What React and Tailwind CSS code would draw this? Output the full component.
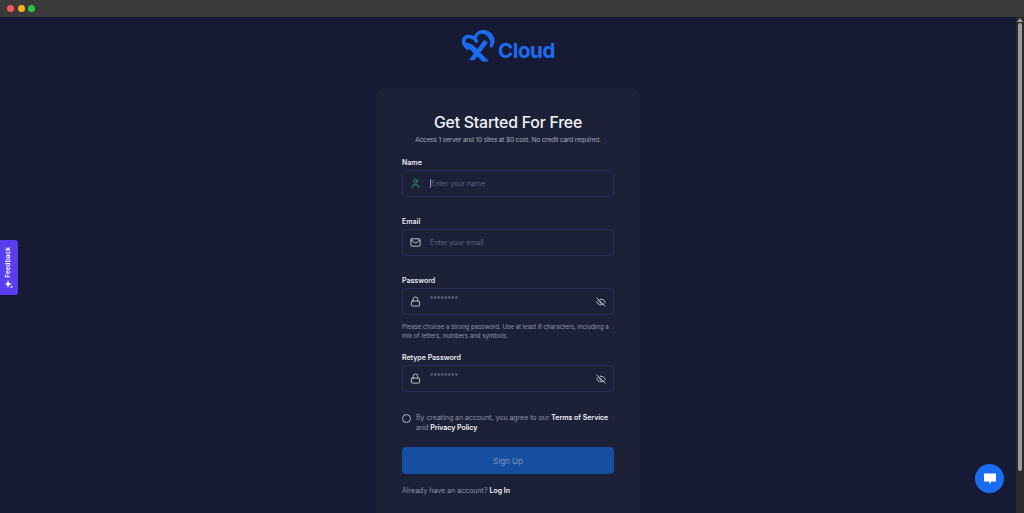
import React from "react";
import { User, Mail, Lock, EyeOff } from "lucide-react";

function Field({ label, placeholder, icon: Icon, iconClass, eye, caret, dots, className = "" }) {
  return (
    <div className={className}>
      <label className="block h-[10px] text-[7px] leading-[10px] font-semibold text-[#e8eaf2]">{label}</label>
      <div className="mt-[2px] flex h-[27px] items-center rounded-[4px] border border-[#262c5c] pl-[7px] pr-[7px]">
        <Icon className={`h-[11px] w-[11px] shrink-0 ${iconClass}`} strokeWidth={2} />
        {caret && <span className="ml-[9px] h-[9px] w-px bg-[#8a90a8]" />}
        <span className={`${caret ? "ml-0" : "ml-[9px]"} flex-1 text-[7px] text-[#5d6380] ${dots ? "-mt-[2px] text-[#747a94]" : "mt-[1px]"}`}>{placeholder}</span>
        {eye && <EyeOff className="h-[10px] w-[10px] text-[#b4b9c9]" strokeWidth={2.4} />}
      </div>
    </div>
  );
}

export default function App() {
  return (
    <div className="flex h-[513px] w-[1024px] flex-col overflow-hidden bg-[#161a35] font-['Inter',sans-serif]">
      <div className="flex h-[17px] shrink-0 items-center gap-[3.5px] bg-[#3a3a3a] pl-[7px]">
        <span className="h-[7px] w-[7px] rounded-full bg-[#fb5a5c]" />
        <span className="h-[7px] w-[7px] rounded-full bg-[#fdb022]" />
        <span className="h-[7px] w-[7px] rounded-full bg-[#27c93f]" />
      </div>
      <div className="flex min-h-0 flex-1">
        <main className="relative flex min-w-0 flex-1 flex-col items-center overflow-hidden">
          <div className="mt-[12px] flex h-[34px] items-center">
            <svg width="34" height="34" viewBox="0 0 34 34" fill="none" className="shrink-0">
              <path d="M6.500 19C1 15 1.500 7.500 7.500 7.500c3.500 0 6 1.500 8 4.500" stroke="#1a6df0" strokeWidth="3.600" strokeLinecap="round" />
              <path d="M12.500 9c1.500-6.500 7.500-9 13-7.500 5 1.500 8.500 6 8 11-.3 2.500-1.500 5-3.500 6.500l-1.500-2c1.500-2 1-5-.5-7.500-2-3.500-5.500-5.500-9-4.500-2 .6-3 2.500-3.500 5Z" fill="#1a6df0" />
              <path d="M3.500 13.500c5 .2 8.500 2 11 5L28 32.500h-6.500L9.500 21C7 18.500 5 16.500 3.500 13.500Z" fill="#1a6df0" />
              <path d="M23 11 8 31h5.500L27 13.500Z" fill="#1a6df0" />
            </svg>
            <span className="ml-[3px] mt-[11px] text-[20.500px] font-bold leading-none tracking-[-0.4px] text-[#1a6df0]">Cloud</span>
          </div>
          <section className="mt-[25px] w-[264px] flex-1 rounded-t-[8px] bg-[#1d2137] px-[26px] pt-[25px]">
            <h1 className="text-center text-[15.800px] font-medium leading-[20px] tracking-[-0.2px] text-[#f2f3f7]">Get Started For Free</h1>
            <p className="mt-[2px] whitespace-nowrap text-center text-[6.600px] leading-[10px] tracking-[-0.2px] text-[#a4a9bd]">Access 1 server and 10 sites at $0 cost. No credit card required.</p>
            <Field className="mt-[13px]" label="Name" placeholder="Enter your name" icon={User} iconClass="text-[#2fa36f]" caret />
            <Field className="mt-[20px]" label="Email" placeholder="Enter your email" icon={Mail} iconClass="text-[#c6cad6]" />
            <Field className="mt-[20px]" label="Password" placeholder="********" icon={Lock} iconClass="text-[#c6cad6]" eye dots />
            <p className="mt-[7px] text-[6.200px] leading-[9px] tracking-[-0.05px] text-[#9398ae]">Please choose a strong password. Use at least 8 characters, including a mix of letters, numbers and symbols.</p>
            <Field className="mt-[13px]" label="Retype Password" placeholder="********" icon={Lock} iconClass="text-[#c6cad6]" eye dots />
            <div className="mt-[21px] flex">
              <span className="mt-[1px] h-[9px] w-[9px] shrink-0 rounded-full border border-[#b4b9c9]" />
              <p className="ml-[5px] text-[7px] leading-[10px] tracking-[-0.03px] text-[#8d93a9]">By creating an account, you agree to our <b className="font-semibold text-[#f2f3f7]">Terms of Service</b> and <b className="font-semibold text-[#f2f3f7]">Privacy Policy</b></p>
            </div>
            <button className="mt-[14px] block h-[27px] w-full rounded-[4px] bg-[#164f9f] text-center text-[8px] text-[#7d93b8]">Sign Up</button>
            <p className="mt-[12px] text-[7px] leading-[10px] text-[#8d93a9]">Already have an account? <b className="font-semibold text-[#f2f3f7]">Log In</b></p>
          </section>
          <div className="absolute left-0 top-[223px] flex h-[55px] w-[18px] flex-col items-center justify-center rounded-r-[3px] bg-[#5b3df0]">
            <span className="-ml-[1px] rotate-180 text-[6.500px] font-semibold leading-none text-white [writing-mode:vertical-rl]">Feedback</span>
            <svg width="8" height="8" viewBox="0 0 8 8" className="mt-[3px]" fill="#fff">
              <path d="M3 0 4 3l3 1-3 1-1 3-1-3-2-1 2-1ZM6.500 5.500l.5 1 1 .5-1 .5-.5.5-.5-.5-1-.5 1-.5Z" />
            </svg>
          </div>
          <div className="absolute bottom-[20px] right-[12px] flex h-[29px] w-[29px] items-center justify-center rounded-full bg-[#1a6df0]">
            <svg width="14" height="13" viewBox="0 0 14 13" fill="#fff">
              <path d="M1 1.500h12v8H8.200L7 12 5.800 9.500H1Z" />
            </svg>
          </div>
        </main>
        <div className="flex w-[8px] shrink-0 flex-col items-center bg-[#2b2b2b] pt-[1px]">
          <svg width="6" height="4" viewBox="0 0 6 4" fill="#a0a0a0"><path d="M3 0 6 4H0Z" /></svg>
          <div className="mt-[1px] h-[448px] w-[4px] rounded-full bg-[#9c9c9c]" />
        </div>
      </div>
    </div>
  );
}
